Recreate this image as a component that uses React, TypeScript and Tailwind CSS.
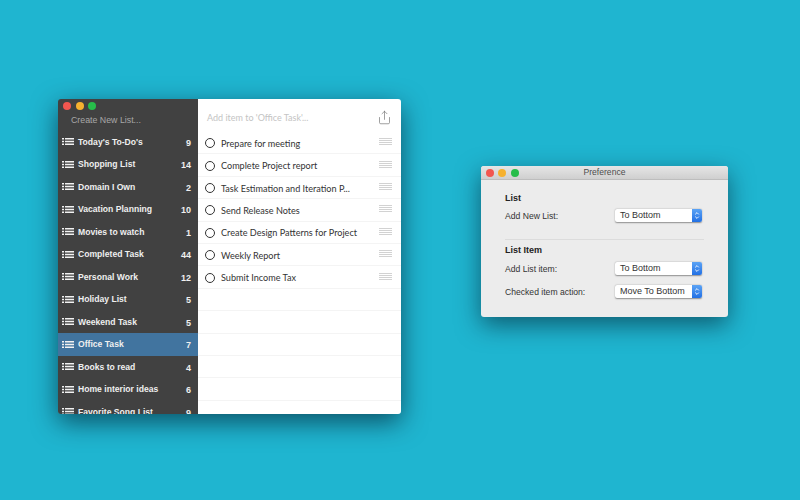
import { Share } from "lucide-react";

const lists = [
  { name: "Today's To-Do's", count: 9 },
  { name: "Shopping List", count: 14 },
  { name: "Domain I Own", count: 2 },
  { name: "Vacation Planning", count: 10 },
  { name: "Movies to watch", count: 1 },
  { name: "Completed Task", count: 44 },
  { name: "Personal Work", count: 12 },
  { name: "Holiday List", count: 5 },
  { name: "Weekend Task", count: 5 },
  { name: "Office Task", count: 7, active: true },
  { name: "Books to read", count: 4 },
  { name: "Home interior ideas", count: 6 },
  { name: "Favorite Song List", count: 9 },
];

const tasks = [
  "Prepare for meeting",
  "Complete Project report",
  "Task Estimation and Iteration P...",
  "Send Release Notes",
  "Create Design Patterns for Project",
  "Weekly Report",
  "Submit Income Tax",
];

function ListIcon() {
  return (
    <svg width="12" height="7" viewBox="0 0 12 7" className="shrink-0" fill="#f2f2f2">
      <rect x="0" y="0" width="2" height="1.5" />
      <rect x="3" y="0" width="9" height="1.5" />
      <rect x="0" y="2.75" width="2" height="1.5" />
      <rect x="3" y="2.75" width="9" height="1.5" />
      <rect x="0" y="5.5" width="2" height="1.5" />
      <rect x="3" y="5.5" width="9" height="1.5" />
    </svg>
  );
}

function Lights({ className }: { className: string }) {
  return (
    <div className={`flex shrink-0 gap-[4.5px] ${className}`}>
      <div className="w-[8px] h-[8px] rounded-full bg-[#f2564f]" />
      <div className="w-[8px] h-[8px] rounded-full bg-[#f6b12f]" />
      <div className="w-[8px] h-[8px] rounded-full bg-[#27bd4a]" />
    </div>
  );
}

function Handle() {
  return (
    <div className="flex flex-col gap-[1px] mb-[2px]">
      <div className="w-[13px] h-px bg-[#d2d2d2]" />
      <div className="w-[13px] h-px bg-[#d2d2d2]" />
      <div className="w-[13px] h-px bg-[#d2d2d2]" />
      <div className="w-[13px] h-px bg-[#d2d2d2]" />
    </div>
  );
}

function Select({ value }: { value: string }) {
  return (
    <div className="w-[87px] h-[13px] flex rounded-[2px] bg-white shadow-[0_0.5px_1.5px_rgba(0,0,0,0.4)] overflow-hidden">
      <div className="flex-1 pl-[5px] text-[9px] leading-[12px] text-[#333]">{value}</div>
      <div className="w-[10px] flex items-center justify-center bg-gradient-to-b from-[#5ba3f5] to-[#2270e4]">
        <svg width="6" height="9" viewBox="0 0 6 9" fill="none" stroke="#fff" strokeWidth="0.9">
          <path d="M1.2 3.4 3 1.6l1.8 1.8" />
          <path d="M1.2 5.6 3 7.4l1.8-1.8" />
        </svg>
      </div>
    </div>
  );
}

function PrefRow({ label, value }: { label: string; value: string }) {
  return (
    <div className="flex items-center justify-between">
      <span className="h-[13px] text-[8.6px] leading-[15px] text-[#333]">{label}</span>
      <Select value={value} />
    </div>
  );
}

export default function App() {
  return (
    <div className="relative w-[800px] h-[500px] overflow-hidden bg-[#1fb5d0] font-['Liberation_Sans',sans-serif]">
      {/* main window */}
      <div className="absolute left-[58px] top-[99px] w-[343px] h-[315px] flex rounded-[3px] overflow-hidden shadow-[0_8px_26px_rgba(0,20,35,0.62)]">
        <div className="w-[140px] bg-[#414141] flex flex-col overflow-hidden">
          <Lights className="mt-[3px] ml-[5px]" />
          <div className="mt-[4px] ml-[13px] h-[16.5px] shrink-0 text-[8.8px] leading-[12px] text-[#a8a8a8]">Create New List...</div>
          {lists.map((list) => (
            <div
              key={list.name}
              className={`h-[22.5px] shrink-0 flex items-center pl-[4px] pr-[7px] ${list.active ? "bg-[#41749f]" : ""}`}
            >
              <ListIcon />
              <span className="ml-[4px] pt-[1px] flex-1 text-[8.6px] font-bold text-[#efefef] whitespace-nowrap">{list.name}</span>
              <span className="pt-[3px] text-[9px] font-bold text-[#efefef]">{list.count}</span>
            </div>
          ))}
        </div>
        <div className="flex-1 bg-white flex flex-col overflow-hidden">
          <div className="h-[33px] shrink-0 flex items-center justify-between pt-[5px] pl-[9px] pr-[9px]">
            <span className="text-[9px] text-[#c4c4c4] font-['Lato',sans-serif]">Add item to 'Office Task'...</span>
            <Share size={15} strokeWidth={1} className="text-[#666] mb-[1px]" />
          </div>
          {tasks.map((task) => (
            <div key={task} className="h-[22.4px] shrink-0 flex items-center pl-[7px] pr-[9px] border-b border-[#f4f4f4]">
              <div className="w-[10px] h-[10px] rounded-full border border-[#333] mt-[1px]" />
              <span className="ml-[6px] pt-[2px] flex-1 text-[9.1px] text-[#333] font-['Lato',sans-serif] whitespace-nowrap">{task}</span>
              <Handle />
            </div>
          ))}
          {[0, 1, 2, 3, 4, 5].map((i) => (
            <div key={i} className="h-[22.4px] shrink-0 border-b border-[#f4f4f4]" />
          ))}
        </div>
      </div>

      {/* preference window */}
      <div className="absolute left-[481px] top-[166px] w-[247px] h-[151px] rounded-[3px] overflow-hidden bg-[#ececec] shadow-[0_8px_24px_rgba(0,20,35,0.55)]">
        <div className="relative h-[14px] flex items-center justify-center bg-gradient-to-b from-[#e6e6e6] to-[#cfcfcf] border-b border-[#bdbdbd]">
          <Lights className="absolute left-[4.5px] top-[3px]" />
          <span className="text-[8.6px] text-[#4d4d4d]">Preference</span>
        </div>
        <div className="px-[24px] pt-[12px]">
          <div className="text-[9px] font-bold leading-[13px] text-[#222]">List</div>
          <div className="mt-[4px] pr-[2px]">
            <PrefRow label="Add New List:" value="To Bottom" />
          </div>
          <div className="mt-[17px] h-px bg-[#dcdcdc]" />
          <div className="mt-[4px] text-[9px] font-bold leading-[13px] text-[#222]">List Item</div>
          <div className="mt-[5px] pr-[2px] flex flex-col gap-[10px]">
            <PrefRow label="Add List item:" value="To Bottom" />
            <PrefRow label="Checked item action:" value="Move To Bottom" />
          </div>
        </div>
      </div>
    </div>
  );
}
